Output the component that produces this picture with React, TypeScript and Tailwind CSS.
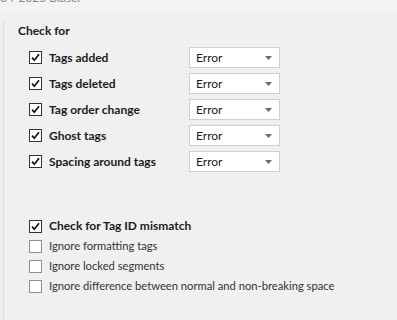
const font = { fontFamily: 'Lato, "Noto Sans", sans-serif' };

const rules = [
  "Tags added",
  "Tags deleted",
  "Tag order change",
  "Ghost tags",
  "Spacing around tags",
];

const options = [
  { label: "Check for Tag ID mismatch", checked: true },
  { label: "Ignore formatting tags", checked: false },
  { label: "Ignore locked segments", checked: false },
  { label: "Ignore difference between normal and non-breaking space", checked: false },
];

function Checkbox({ checked }: { checked: boolean }) {
  return (
    <span
      className={`flex h-[13px] w-[13px] shrink-0 items-center justify-center border bg-white ${
        checked ? "border-[#333333]" : "border-[#8f8f8f]"
      }`}
    >
      {checked && (
        <svg width="9" height="9" viewBox="0 0 9 9">
          <path d="M1 4.6 L3.3 7.2 L8 1.2" fill="none" stroke="#111" strokeWidth="1.7" />
        </svg>
      )}
    </span>
  );
}

function Dropdown({ value }: { value: string }) {
  return (
    <div className="flex h-[21px] w-[91px] items-center border border-[#cfcfcf] bg-white pl-[6px] pr-[7px] text-[12px] text-[#1b1b1b]">
      <span>{value}</span>
      <svg className="ml-auto" width="7" height="4" viewBox="0 0 7 4">
        <path d="M0 0 H7 L3.5 4 Z" fill="#6b6b6b" />
      </svg>
    </div>
  );
}

export default function App() {
  return (
    <div className="h-[320px] w-[397px] overflow-hidden bg-[#f0f0f0] text-[#1b1b1b]" style={font}>
      <div className="h-[13px] overflow-hidden bg-[#f3f3f3]">
        <div className="mt-[-10px] text-[12px] leading-[16px] text-[#8a8a8a]">04-2025 Blaser</div>
      </div>

      <div className="ml-[3px] mt-[9px] h-[298px] border-l border-[#dadada] pl-[14px] pt-[1px]">
        <div className="text-[12px] font-bold leading-[16px]">Check for</div>

        <div className="mt-[8px] flex flex-col gap-[5px]">
          {rules.map((r) => (
            <div key={r} className="flex h-[21px] items-center">
              <div className="ml-[11px] flex w-[160px] items-center gap-[7px]">
                <Checkbox checked />
                <span className="text-[12px] font-bold">{r}</span>
              </div>
              <Dropdown value="Error" />
            </div>
          ))}
        </div>

        <div className="mt-[44px] flex flex-col">
          {options.map((o) => (
            <div key={o.label} className="ml-[11px] flex h-[20px] items-center gap-[7px]">
              <Checkbox checked={o.checked} />
              <span className={o.checked ? "text-[12px] font-bold" : "text-[11.2px] text-[#333333]"}>
                {o.label}
              </span>
            </div>
          ))}
        </div>
      </div>
    </div>
  );
}
